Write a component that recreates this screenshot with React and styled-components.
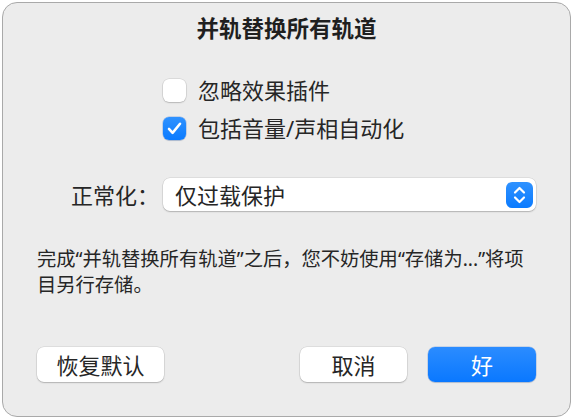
import React from "react";
import styled, { createGlobalStyle } from "styled-components";

const Global = createGlobalStyle`
  html, body { margin: 0; padding: 0; background: #ffffff; }
  body {
    font-family: "Noto Sans", "Noto Sans CJK SC", sans-serif;
    -webkit-font-smoothing: antialiased;
  }
`;

const Dialog = styled.div`
  box-sizing: border-box;
  margin: 2px 0 0 2px;
  width: 569px;
  height: 415px;
  border: 1px solid #a9a9a9;
  border-radius: 15px;
  background: #ececec;
  padding: 11px 34px 0 34px;
  display: flex;
  flex-direction: column;
  color: #262626;
`;

const Title = styled.div`
  font-size: 22.5px;
  font-weight: 700;
  line-height: 30px;
  text-align: center;
  color: #1f1f1f;
`;

const CheckList = styled.div`
  margin: 27px 0 0 126px;
  display: flex;
  flex-direction: column;
`;

const CheckRow = styled.label`
  display: flex;
  align-items: center;
  gap: 12px;
  height: 38px;
  font-size: 22px;
  line-height: 30px;
`;

const Box = styled.span`
  box-sizing: border-box;
  width: 23px;
  height: 23px;
  border-radius: 6px;
  display: flex;
  align-items: center;
  justify-content: center;
  background: ${(p) => (p.$checked ? "linear-gradient(#2f92ff, #0b7bff)" : "#ffffff")};
  box-shadow: ${(p) =>
    p.$checked
      ? "0 0 0 0.5px rgba(0,80,200,0.35), 0 1px 1px rgba(0,0,0,0.12)"
      : "0 0 0 0.5px rgba(0,0,0,0.14), 0 1px 1.5px rgba(0,0,0,0.16)"};
`;

const FieldRow = styled.div`
  display: grid;
  grid-template-columns: 126px 1fr;
  align-items: center;
  margin-top: 31px;
`;

const FieldLabel = styled.div`
  text-align: right;
  padding-right: 4px;
  font-size: 22px;
  line-height: 30px;
`;

const Popup = styled.div`
  box-sizing: border-box;
  height: 33px;
  border-radius: 7px;
  background: #ffffff;
  box-shadow: 0 0 0 0.5px rgba(0,0,0,0.12), 0 1px 1.5px rgba(0,0,0,0.2);
  display: flex;
  align-items: center;
  justify-content: space-between;
  padding: 0 3px 0 12px;
  font-size: 22px;
  line-height: 30px;
`;

const Stepper = styled.span`
  width: 27px;
  height: 26px;
  border-radius: 6px;
  background: linear-gradient(#2f92ff, #0b7bff);
  display: flex;
  align-items: center;
  justify-content: center;
`;

const Note = styled.p`
  margin: 35px 0 0 0;
  font-size: 19.3px;
  line-height: 26px;
`;

const ButtonRow = styled.div`
  display: flex;
  align-items: center;
  gap: 21px;
  margin-top: 49px;
`;

const Spacer = styled.div`
  flex: 1;
`;

const Button = styled.button`
  box-sizing: border-box;
  width: ${(p) => p.$w}px;
  height: 35px;
  border: none;
  border-radius: 7px;
  padding: 0;
  font-family: inherit;
  font-size: 22px;
  line-height: 30px;
  color: ${(p) => (p.$primary ? "#ffffff" : "#262626")};
  background: ${(p) => (p.$primary ? "linear-gradient(#2b8cff, #0a78ff)" : "#ffffff")};
  box-shadow: ${(p) =>
    p.$primary
      ? "0 0 0 0.5px rgba(0,80,200,0.3), 0 1px 1px rgba(0,0,0,0.12)"
      : "0 0 0 0.5px rgba(0,0,0,0.12), 0 1px 1.5px rgba(0,0,0,0.2)"};
`;

const Check = () => (
  <svg width="19" height="19" viewBox="0 0 24 24" fill="none">
    <path d="M5 12.5l4.6 5L19 6" stroke="#fff" strokeWidth="3.2" strokeLinecap="round" strokeLinejoin="round" />
  </svg>
);

const Chevrons = () => (
  <svg width="27" height="26" viewBox="0 0 27 26" fill="none">
    <path d="M9 10.5L13.5 6L18 10.5" stroke="#fff" strokeWidth="2.2" strokeLinecap="round" strokeLinejoin="round" />
    <path d="M9 15.5L13.5 20L18 15.5" stroke="#fff" strokeWidth="2.2" strokeLinecap="round" strokeLinejoin="round" />
  </svg>
);

export default function App() {
  return (
    <>
      <Global />
      <Dialog>
        <Title>并轨替换所有轨道</Title>
        <CheckList>
          <CheckRow>
            <Box />
            忽略效果插件
          </CheckRow>
          <CheckRow>
            <Box $checked>
              <Check />
            </Box>
            包括音量/声相自动化
          </CheckRow>
        </CheckList>
        <FieldRow>
          <FieldLabel>正常化：</FieldLabel>
          <Popup>
            仅过载保护
            <Stepper>
              <Chevrons />
            </Stepper>
          </Popup>
        </FieldRow>
        <Note>
          完成“并轨替换所有轨道”之后，您不妨使用“存储为...”将项
          <br />
          目另行存储。
        </Note>
        <ButtonRow>
          <Button $w={127}>恢复默认</Button>
          <Spacer />
          <Button $w={107}>取消</Button>
          <Button $w={108} $primary>
            好
          </Button>
        </ButtonRow>
      </Dialog>
    </>
  );
}
